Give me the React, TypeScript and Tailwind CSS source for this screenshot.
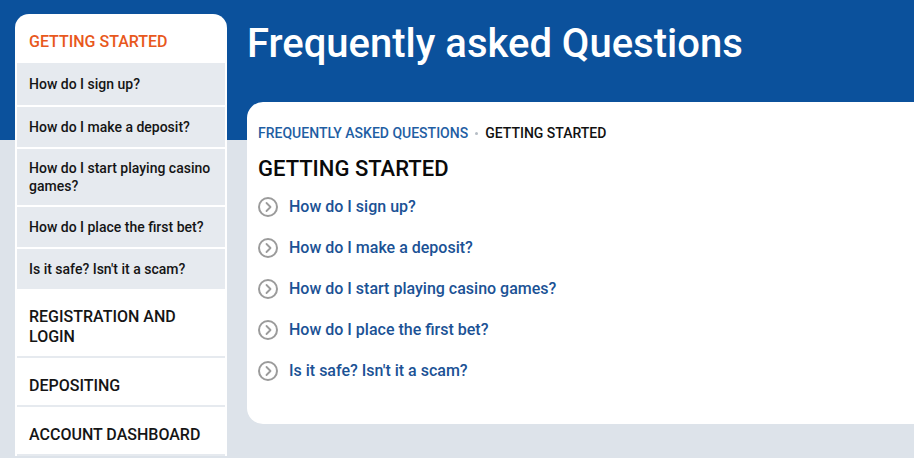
import React from "react";

const questions = [
  "How do I sign up?",
  "How do I make a deposit?",
  "How do I start playing casino games?",
  "How do I place the first bet?",
  "Is it safe? Isn't it a scam?",
];

const sections = ["REGISTRATION AND LOGIN", "DEPOSITING", "ACCOUNT DASHBOARD"];

function ChevronCircle() {
  return (
    <svg width="20" height="20" viewBox="0 0 20 20" fill="none" className="shrink-0">
      <circle cx="10" cy="10" r="9" stroke="#9b9b9b" strokeWidth="2" />
      <path d="M8.5 6l4 4-4 4" stroke="#9b9b9b" strokeWidth="1.8" strokeLinecap="round" strokeLinejoin="round" />
    </svg>
  );
}

export default function App() {
  return (
    <div className="h-[458px] w-[914px] overflow-hidden bg-[linear-gradient(to_bottom,#0b519c_140px,#dde3ea_140px)] font-['Roboto',sans-serif]">
      <div className="flex gap-[20px] pl-[15px] pt-[14px]">
        {/* sidebar */}
        <aside className="w-[212px] shrink-0 rounded-t-[14px] bg-white px-[2px]">
          <div className="h-[49px] pl-[12px] pt-[18px] text-[16px] font-medium leading-[20px] text-[#e8581c]">
            GETTING STARTED
          </div>
          <div className="flex flex-col gap-[2px]">
            {questions.map((q, i) => (
              <div
                key={q}
                className={
                  "flex items-center bg-[#e6eaef] px-[12px] py-[10px] text-[14px] font-medium leading-[18px] text-[#151515] " +
                  (i === 0 ? "min-h-[42px]" : "min-h-[40px]")
                }
              >
                {q}
              </div>
            ))}
          </div>
          {sections.map((s) => (
            <div
              key={s}
              className="border-b-2 border-[#e6eaef] px-[12px] pt-[18px] pb-[9px] text-[16px] font-medium leading-[20px] text-[#151515]"
            >
              {s}
            </div>
          ))}
        </aside>

        {/* main */}
        <main className="w-[720px] shrink-0">
          <h1 className="mt-[6px] text-[40px] font-medium leading-[48px] text-white">
            Frequently asked Questions
          </h1>
          <section className="mt-[34px] h-[322px] rounded-l-[16px] bg-white px-[11px] pt-[21px]">
            <div className="flex items-center gap-[7px] text-[14px] font-medium leading-[20px]">
              <span className="text-[#1f5ea3]">FREQUENTLY ASKED QUESTIONS</span>
              <span className="h-[3px] w-[3px] rounded-full bg-[#b5bcc4]" />
              <span className="text-[#111]">GETTING STARTED</span>
            </div>
            <h2 className="mt-[12px] text-[22px] font-medium leading-[28px] text-[#0a0a0a]">
              GETTING STARTED
            </h2>
            <ul className="mt-[3px] flex flex-col">
              {questions.map((q) => (
                <li key={q} className="flex h-[41px] items-center gap-[11px]">
                  <ChevronCircle />
                  <span className="text-[16px] font-medium text-[#1b5295]">{q}</span>
                </li>
              ))}
            </ul>
          </section>
        </main>
      </div>
    </div>
  );
}
